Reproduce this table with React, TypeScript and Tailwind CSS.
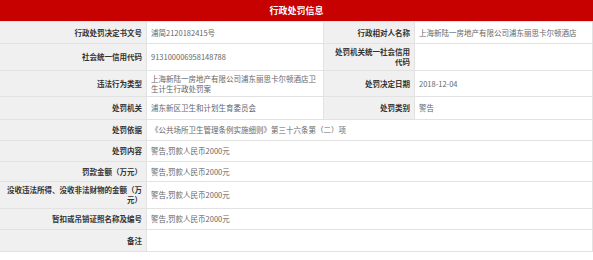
import React from 'react';

const font = { fontFamily: '"Noto Sans CJK SC", "Noto Sans", sans-serif' };

const Label: React.FC<{ children: React.ReactNode; h: string }> = ({ children, h }) => (
  <div className={`${h} flex items-center justify-end text-right bg-[#f0f0f0] border-b border-r border-[#e2e2e2] px-[4px] text-[7.5px] leading-[10px] font-semibold text-[#333]`}>
    <span>{children}</span>
  </div>
);

const Value: React.FC<{ children?: React.ReactNode; h: string; span?: boolean }> = ({ children, h, span }) => (
  <div className={`${h} ${span ? 'col-span-3' : ''} flex items-center bg-white border-b border-r border-[#e2e2e2] px-[4px] text-[7.5px] leading-[10px] text-[#666]`}>
    <span>{children}</span>
  </div>
);

const App: React.FC = () => {
  return (
    <div className="w-[593px] h-[260px] bg-white overflow-hidden" style={font}>
      <div className="w-[593px] h-[22px] bg-[#c70000] flex items-center justify-center text-white text-[9px] font-bold border-b border-[#e2e2e2]">
        行政处罚信息
      </div>
      <div className="grid grid-cols-[147px_177px_91px_178px]">
        <Label h="h-[22px]">行政处罚决定书文号</Label>
        <Value h="h-[22px]">浦简2120182415号</Value>
        <Label h="h-[22px]">行政相对人名称</Label>
        <Value h="h-[22px]">上海新陆一房地产有限公司浦东丽思卡尔顿酒店</Value>

        <Label h="h-[27px]">社会统一信用代码</Label>
        <Value h="h-[27px]">913100006958148788</Value>
        <Label h="h-[27px]">处罚机关统一社会信用代码</Label>
        <Value h="h-[27px]" />

        <Label h="h-[26px]">违法行为类型</Label>
        <Value h="h-[26px]">上海新陆一房地产有限公司浦东丽思卡尔顿酒店卫生计生行政处罚案</Value>
        <Label h="h-[26px]">处罚决定日期</Label>
        <Value h="h-[26px]">2018-12-04</Value>

        <Label h="h-[23px]">处罚机关</Label>
        <Value h="h-[23px]">浦东新区卫生和计划生育委员会</Value>
        <Label h="h-[23px]">处罚类别</Label>
        <Value h="h-[23px]">警告</Value>

        <Label h="h-[21px]">处罚依据</Label>
        <Value h="h-[21px]" span>《公共场所卫生管理条例实施细则》第三十六条第（二）项</Value>

        <Label h="h-[21px]">处罚内容</Label>
        <Value h="h-[21px]" span>警告,罚款人民币2000元</Value>

        <Label h="h-[20px]">罚款金额（万元）</Label>
        <Value h="h-[20px]" span>警告,罚款人民币2000元</Value>

        <Label h="h-[27px]">没收违法所得、没收非法财物的金额（万元）</Label>
        <Value h="h-[27px]" span>警告,罚款人民币2000元</Value>

        <Label h="h-[21px]">暂扣或吊销证照名称及编号</Label>
        <Value h="h-[21px]" span>警告,罚款人民币2000元</Value>

        <Label h="h-[22px]">备注</Label>
        <Value h="h-[22px]" span />
      </div>
    </div>
  );
};

export default App;
